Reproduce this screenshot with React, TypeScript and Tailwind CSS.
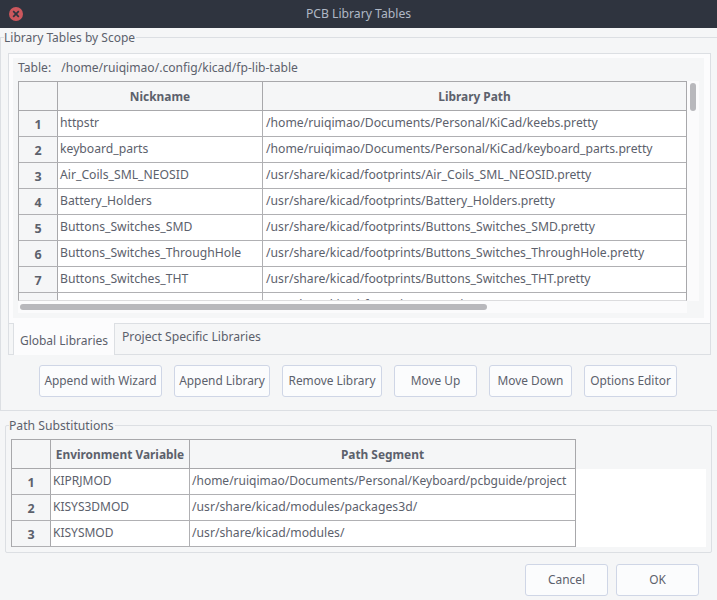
const font = { fontFamily: '"Noto Sans", sans-serif' };

const libs: [string, string][] = [
  ["httpstr", "/home/ruiqimao/Documents/Personal/KiCad/keebs.pretty"],
  ["keyboard_parts", "/home/ruiqimao/Documents/Personal/KiCad/keyboard_parts.pretty"],
  ["Air_Coils_SML_NEOSID", "/usr/share/kicad/footprints/Air_Coils_SML_NEOSID.pretty"],
  ["Battery_Holders", "/usr/share/kicad/footprints/Battery_Holders.pretty"],
  ["Buttons_Switches_SMD", "/usr/share/kicad/footprints/Buttons_Switches_SMD.pretty"],
  ["Buttons_Switches_ThroughHole", "/usr/share/kicad/footprints/Buttons_Switches_ThroughHole.pretty"],
  ["Buttons_Switches_THT", "/usr/share/kicad/footprints/Buttons_Switches_THT.pretty"],
  ["", "/usr/share/kicad/footprints/Capacitors_SMD.pretty"],
];

const envs: [string, string, string][] = [
  ["KIPRJMOD", "/home/ruiqimao/Documents/Personal/Keyboard/pcbguide/project", "text-[12px]"],
  ["KISYS3DMOD", "/usr/share/kicad/modules/packages3d/", "text-[12.2px]"],
  ["KISYSMOD", "/usr/share/kicad/modules/", "text-[12.2px]"],
];

function Btn({ label, w }: { label: string; w: string }) {
  return (
    <button className={`h-8 ${w} shrink-0 rounded-[3px] border border-[#cfd6e6] bg-[#fbfcfd] text-[11.9px] text-[#5c616c] flex items-center justify-center whitespace-nowrap`}>
      {label}
    </button>
  );
}

function Row({ n, a, b, c1, c2, numW, aText = "text-[12.2px]", bText = "text-[12.2px]", bPad = "pl-[3px]" }: { n: number; a: string; b: string; c1: string; c2: string; numW: string; aText?: string; bText?: string; bPad?: string }) {
  return (
    <div className="flex h-[26px] shrink-0 border-b border-[#b0b0b3] text-[#5c616c]">
      <div className={`${numW} shrink-0 bg-[#f5f6f7] border-r border-[#a8a8ab] flex items-center justify-center font-bold text-[12.5px] pt-[3px]`}>{n}</div>
      <div className={`${c1} ${aText} shrink-0 bg-white border-r border-[#b0b0b3] pl-[2px] pb-[1px] flex items-center overflow-hidden whitespace-nowrap`}>{a}</div>
      <div className={`${c2} ${bText} ${bPad} shrink-0 bg-white pb-[1px] flex items-center overflow-hidden whitespace-nowrap`}>{b}</div>
    </div>
  );
}

function Header({ a, b, c1, c2, numW }: { a: string; b: string; c1: string; c2: string; numW: string }) {
  return (
    <div className="flex h-[29px] shrink-0 border-b border-[#a8a8ab] text-[11.9px] font-bold text-[#5c616c] bg-[#f5f6f7]">
      <div className={`${numW} shrink-0 border-r border-[#a8a8ab]`} />
      <div className={`${c1} shrink-0 border-r border-[#a8a8ab] pt-px flex items-center justify-center whitespace-nowrap`}>{a}</div>
      <div className={`${c2} shrink-0 pt-px flex items-center justify-center whitespace-nowrap`}>{b}</div>
    </div>
  );
}

export default function App() {
  return (
    <div style={font} className="w-[717px] h-[600px] overflow-hidden bg-[#f5f6f7] text-[#5c616c] flex flex-col relative">
      {/* title bar */}
      <div className="h-[28px] shrink-0 bg-[#2f343f] flex items-center justify-center relative text-[12.2px] text-[#afb8c6]">
        PCB Library Tables
        <div className="absolute left-[9px] top-[7px] w-[14px] h-[14px] rounded-full bg-[#cc575d] flex items-center justify-center">
          <svg width="8" height="8" viewBox="0 0 8 8"><path d="M1.2 1.2 6.8 6.8M6.8 1.2 1.2 6.8" stroke="#2f343f" strokeWidth="1.7" /></svg>
        </div>
      </div>

      {/* group 1 */}
      <div className="mt-[9px] h-[374px] shrink-0 border-t border-b border-l border-[#dcdfe3] relative pt-[15px] pl-[7px]">
        <div className="absolute left-[3px] -top-[9px] bg-[#f5f6f7] pr-[1px] text-[12px] leading-[17px]">Library Tables by Scope</div>
        <div className="w-[703px] h-[302px] border border-[#dcdfe3] flex flex-col">
          {/* notebook page */}
          <div className="h-[269px] shrink-0 bg-[#fcfcfd] pl-[4px] pt-[4px]">
            <div className="w-[691px] h-[260px] bg-[#f5f6f7] pl-[5px]">
              <div className="h-[23px] flex items-center text-[12.1px] pb-[2px]">
                <span>Table:</span>
                <span className="ml-[10px]">/home/ruiqimao/.config/kicad/fp-lib-table</span>
              </div>
              <div className="flex relative">
                <div className="w-[669px] flex flex-col shrink-0">
                  <div className="h-[220px] overflow-hidden border-t border-l border-r border-b border-[#a8a8ab] border-b-[#dcdcde] flex flex-col">
                    <Header a="Nickname" b="Library Path" numW="w-[39px]" c1="w-[205px]" c2="w-[423px]" />
                    {libs.map((r, i) => (
                      <Row key={i} n={i + 1} a={r[0]} b={r[1]} numW="w-[39px]" c1="w-[205px]" c2="w-[423px]" />
                    ))}
                  </div>
                  <div className="h-[12px] bg-[#fbfbfc]" />
                </div>
                <div className="w-[12px] h-[220px] bg-[#fbfbfc]" />
                <div className="absolute left-[2px] top-[223px] w-[467px] h-[6px] rounded-[3px] bg-[#b8b8bc]" />
                <div className="absolute left-[672px] top-[2px] w-[6px] h-[28px] rounded-[3px] bg-[#b8b8bc]" />
              </div>
            </div>
          </div>
          {/* tabs */}
          <div className="flex-1 flex pl-[4px] border-t border-[#dcdfe3]">
            <div className="w-[102px] h-[32px] -mt-px bg-[#fcfcfd] border-l border-r border-[#dcdfe3] flex items-center justify-center pt-[3px] text-[12px] whitespace-nowrap">Global Libraries</div>
            <div className="pl-[7px] pt-[4px] text-[12.2px] whitespace-nowrap">Project Specific Libraries</div>
          </div>
        </div>
        <div className="mt-[10px] ml-[31px] flex gap-[12px]">
          <Btn label="Append with Wizard" w="w-[123px]" />
          <Btn label="Append Library" w="w-[96px]" />
          <Btn label="Remove Library" w="w-[100px]" />
          <Btn label="Move Up" w="w-[83px]" />
          <Btn label="Move Down" w="w-[83px]" />
          <Btn label="Options Editor" w="w-[93px]" />
        </div>
      </div>

      {/* group 2 */}
      <div className="mt-[14px] ml-[5px] w-[707px] h-[128px] shrink-0 border border-[#dcdfe3] rounded-[2px] relative pt-[13px] pl-[5px]">
        <div className="absolute left-[3px] -top-[9px] bg-[#f5f6f7] pr-[1px] text-[12.2px] leading-[17px]">Path Substitutions</div>
        <div className="w-[695px] flex bg-white">
          <div className="w-[565px] shrink-0 border-t border-l border-r border-[#a8a8ab] flex flex-col">
            <Header a="Environment Variable" b="Path Segment" numW="w-[39px]" c1="w-[139px]" c2="w-[385px]" />
            {envs.map((r, i) => (
              <Row key={i} n={i + 1} a={r[0]} b={r[1]} aText="text-[12px]" bText={r[2]} bPad="pl-[2px]" numW="w-[39px]" c1="w-[139px]" c2="w-[385px]" />
            ))}
          </div>
          <div className="flex-1 h-[30px] bg-[#f5f6f7]" />
        </div>
      </div>

      {/* dialog buttons */}
      <div className="mt-[11px] flex justify-end gap-[8px] pr-[18px]">
        <Btn label="Cancel" w="w-[83px]" />
        <Btn label="OK" w="w-[83px]" />
      </div>
    </div>
  );
}
